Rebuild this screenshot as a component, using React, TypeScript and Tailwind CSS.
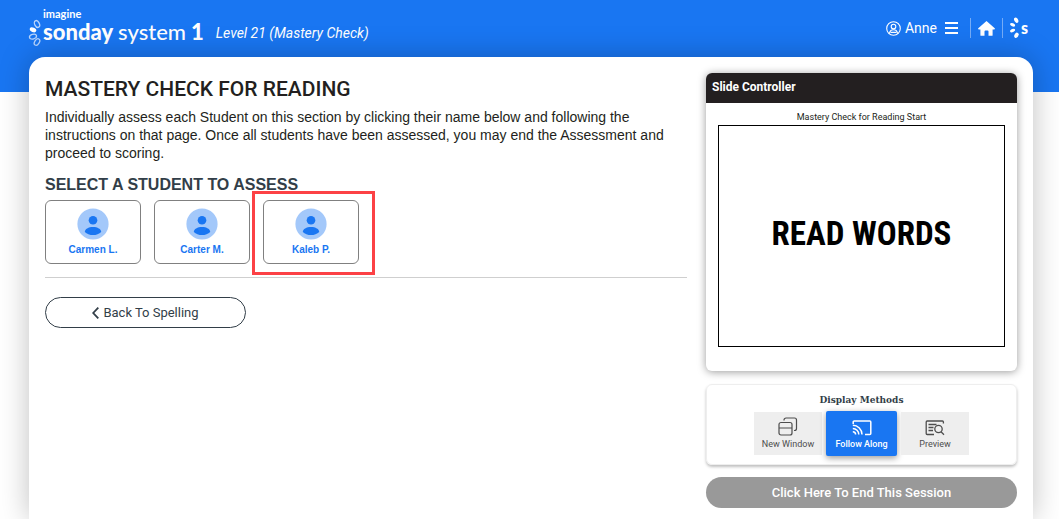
import React, { useState } from "react";

// Students waiting for this part of the assessment
const students = [
  { id: "carmen", name: "Carmen L.", highlighted: false },
  { id: "carter", name: "Carter M.", highlighted: false },
  { id: "kaleb", name: "Kaleb P.", highlighted: true },
];

const LogoPetals = () => (
  <svg width="14" height="30" viewBox="0 0 14 30" fill="none" stroke="#b9d5fc" strokeWidth="1.3" aria-hidden="true">
    <ellipse cx="9" cy="5" rx="2.3" ry="3.6" transform="rotate(-28 9 5)" />
    <ellipse cx="5" cy="10.8" rx="2.8" ry="1.6" transform="rotate(22 5 10.8)" fill="#fff" stroke="#fff" />
    <ellipse cx="5" cy="17.6" rx="3.6" ry="2.3" transform="rotate(-18 5 17.6)" />
    <ellipse cx="9" cy="23" rx="2.3" ry="3.6" transform="rotate(32 9 23)" />
  </svg>
);

const MarkPetals = () => (
  <svg width="11" height="22" viewBox="0 0 11 22" fill="#fff" aria-hidden="true">
    <ellipse cx="7.2" cy="3.2" rx="1.9" ry="2.8" transform="rotate(-28 7.2 3.2)" />
    <ellipse cx="3.6" cy="7.8" rx="2.7" ry="1.6" transform="rotate(22 3.6 7.8)" />
    <ellipse cx="3.6" cy="13.6" rx="2.7" ry="1.6" transform="rotate(-22 3.6 13.6)" />
    <ellipse cx="7.4" cy="18.3" rx="1.9" ry="2.8" transform="rotate(30 7.4 18.3)" />
  </svg>
);

const UserCircle = () => (
  <svg width="15" height="15" viewBox="0 0 15 15" fill="none" stroke="#fff" strokeWidth="1.1" aria-hidden="true">
    <circle cx="7.5" cy="7.5" r="6.8" />
    <circle cx="7.5" cy="5.6" r="2.3" />
    <path d="M3.4 12.6c.3-2.5 1.9-3.9 4.1-3.9s3.8 1.4 4.1 3.9M4.6 11.4h5.8" />
  </svg>
);

const HomeIcon = () => (
  <svg width="17" height="15" viewBox="0 0 17 15" fill="#fff" aria-hidden="true">
    <path d="M8.5 0 17 7.6l-.6.9h-1.8v5.7a.6.6 0 0 1-.6.6h-3.5v-4.2a1 1 0 0 0-1-1h-2a1 1 0 0 0-1 1v4.200H3a.6.6 0 0 1-.6-.6V8.500H.6L0 7.600z" />
  </svg>
);

const Avatar = () => (
  <svg width="32" height="32" viewBox="0 0 32 32" aria-hidden="true">
    <circle cx="16" cy="16" r="15.6" fill="#a3c8fa" />
    <circle cx="16" cy="12.2" r="4.3" fill="#1976f2" />
    <path d="M7.800 24c0-2.800 3.700-4.900 8.200-4.900s8.200 2.100 8.200 4.900c-2 2-4.900 3.100-8.200 3.100S9.800 26 7.800 24z" fill="#1976f2" />
  </svg>
);

const WindowsIcon = () => (
  <svg width="20" height="19" viewBox="0 0 20 19" fill="none" stroke="currentColor" strokeWidth="1.2" aria-hidden="true">
    <rect x="1" y="5.5" width="13" height="12.5" rx="2" />
    <path d="M1 11h13M6 3.500V3a2 2 0 0 1 2-2h8.500a2 2 0 0 1 2 2v8.500a2 2 0 0 1-2 2H16" />
  </svg>
);

const CastIcon = () => (
  <svg width="20" height="19" viewBox="0 0 20 19" fill="none" stroke="currentColor" strokeWidth="1.5" aria-hidden="true">
    <path d="M1.200 7V5a1 1 0 0 1 1-1h15.600a1 1 0 0 1 1 1v11.500a1 1 0 0 1-1 1H13" />
    <path d="M.8 8.300a9.200 9.200 0 0 1 9.200 9.200M.8 11.500a6 6 0 0 1 6 6M.8 14.700a2.800 2.800 0 0 1 2.800 2.800" />
  </svg>
);

const PreviewIcon = () => (
  <svg width="20" height="19" viewBox="0 0 20 19" fill="none" stroke="currentColor" strokeWidth="1.3" aria-hidden="true">
    <path d="M18.400 6.500V5a1 1 0 0 0-1-1H2.200a1 1 0 0 0-1 1v11.500a1 1 0 0 0 1 1H9" />
    <path d="M3.500 7.500h8M3.500 10.500h5M3.500 13.500h4.500" />
    <circle cx="13.5" cy="12" r="3.7" />
    <path d="M16 14.700l3 3" />
  </svg>
);

const displayMethods = [
  { id: "window", label: "New Window", Icon: WindowsIcon },
  { id: "follow", label: "Follow Along", Icon: CastIcon },
  { id: "preview", label: "Preview", Icon: PreviewIcon },
];

const App = () => {
  const [method, setMethod] = useState("follow");

  return (
    <div className="flex min-h-screen flex-col overflow-hidden bg-white font-[Roboto,sans-serif] text-[#231f20]">
      {/* Top bar */}
      <header className="flex h-[92px] shrink-0 items-start justify-between bg-[#1976f2] pr-[31px] pl-7 text-white">
        <div className="flex items-start pt-2">
          <a href="#home" className="flex items-start gap-px font-[Lato,sans-serif]">
            <span className="pt-[11px]">
              <LogoPetals />
            </span>
            <span className="flex flex-col">
              <span className="text-[11px] leading-3 font-bold">imagine</span>
              <span className="flex gap-[5px] text-[22px] leading-6 font-black">
                sonday <span className="font-medium">system</span> <span>1</span>
              </span>
            </span>
          </a>
          <p className="pt-[15px] pl-3 text-sm leading-5 italic">Level 21 (Mastery Check)</p>
        </div>
        <nav className="flex items-center pt-[17px]">
          <button type="button" className="flex items-center gap-1 text-sm leading-5">
            <UserCircle />
            Anne
            <svg width="13" height="13" viewBox="0 0 13 13" stroke="#fff" strokeWidth="2" className="ml-1" aria-hidden="true">
              <path d="M0 1h13M0 6h13M0 11h13" />
            </svg>
          </button>
          <a href="#dashboard" aria-label="Home" className="ml-3 flex h-5 items-center border-x border-white/40 px-[7px]">
            <HomeIcon />
          </a>
          <a
            href="#systems"
            className="ml-[6px] flex items-center gap-px font-[Lato,sans-serif] text-base leading-5 font-black"
          >
            <MarkPetals />s
          </a>
        </nav>
      </header>

      <main className="-mt-[35px] mr-[26px] ml-[29px] flex flex-1 gap-[19px] rounded-t-2xl bg-white px-4 pt-4 pb-[11px] shadow-[0_0_30px_rgba(0,0,0,0.25)]">
        {/* Assessment */}
        <section className="min-w-0 flex-1">
          <h1 className="text-[21px] leading-8 font-medium">MASTERY CHECK FOR READING</h1>
          <p className="mt-[3px] font-['Liberation_Sans',sans-serif] text-sm leading-[18px]">
            Individually assess each Student on this section by clicking their name below and following the instructions on
            that page. Once all students have been assessed, you may end the Assessment and proceed to scoring.
          </p>
          <h2 className="mt-[13px] font-['Liberation_Sans',sans-serif] text-base leading-5 font-bold text-[#323e48]">
            SELECT A STUDENT TO ASSESS
          </h2>
          <ul className="mt-[5px] flex gap-[13px] border-b border-[#cfcfcf] pb-[13px]">
            {students.map((student) => (
              <li key={student.id} className="relative">
                <button
                  type="button"
                  className="flex h-16 w-24 flex-col items-center gap-[2px] rounded-md border border-[#808080] pt-[7px] font-['Liberation_Sans',sans-serif] text-[10px] leading-4 font-bold text-[#1976f2]"
                >
                  <Avatar />
                  {student.name}
                </button>
                {student.highlighted && (
                  <span className="pointer-events-none absolute -top-[9px] -right-4 -bottom-[11px] -left-[11px] border-3 border-[#fc4145]" />
                )}
              </li>
            ))}
          </ul>
          <button
            type="button"
            className="mt-[19px] flex h-[31px] w-[201px] items-center justify-center gap-1 rounded-full border border-[#323e48] text-[13px] text-[#323e48]"
          >
            <svg width="7" height="12" viewBox="0 0 7 12" fill="none" stroke="currentColor" strokeWidth="1.8" aria-hidden="true">
              <path d="M6.300.6 1.200 6l5.100 5.400" />
            </svg>
            Back To Spelling
          </button>
        </section>

        {/* Slide preview and display options */}
        <aside className="w-[311px] shrink-0">
          <div className="overflow-hidden rounded-md shadow-[0_1px_8px_rgba(0,0,0,0.4)]">
            <h2 className="bg-[#231f20] px-[6px] pb-[2px] text-xs leading-7 font-bold text-white">Slide Controller</h2>
            <div className="px-3 pt-[7px] pb-6">
              <p className="pb-px text-center text-[9px] leading-[14px]">Mastery Check for Reading Start</p>
              <div className="flex h-[222px] items-center justify-center border border-black pb-1 font-['Roboto_Condensed',Roboto,sans-serif] text-[33px] font-bold text-black">
                READ WORDS
              </div>
            </div>
          </div>

          <div className="mt-[13px] h-[81px] rounded-md border border-[#eeeeee] pt-2 shadow-[0_2px_3px_rgba(0,0,0,0.25)]">
            <h3 className="text-center font-['DejaVu_Serif_Condensed','DejaVu_Serif',serif] text-[10px] leading-[14px] font-bold text-[#323e48]">
              Display Methods
            </h3>
            <div className="mt-1 flex items-center justify-center gap-1">
              {displayMethods.map(({ id, label, Icon }) => (
                <button
                  key={id}
                  type="button"
                  aria-pressed={id === method}
                  onClick={() => setMethod(id)}
                  className={
                    id === method
                      ? "flex h-[45px] w-[71px] flex-col items-center justify-center gap-[2px] rounded-xs bg-[#1976f2] text-[9px] leading-3 font-medium text-white shadow-[0_2px_6px_rgba(0,0,0,0.4)]"
                      : "flex h-[43px] w-[68px] flex-col items-center justify-center gap-[2px] bg-[#eeeeee] text-[9px] leading-3 text-[#4d4d4d]"
                  }
                >
                  <Icon />
                  {label}
                </button>
              ))}
            </div>
          </div>

          <button type="button" className="mt-3 h-[31px] w-full rounded-full bg-[#999999] text-[13px] font-medium text-white">
            Click Here To End This Session
          </button>
        </aside>
      </main>
    </div>
  );
};

export default App;
